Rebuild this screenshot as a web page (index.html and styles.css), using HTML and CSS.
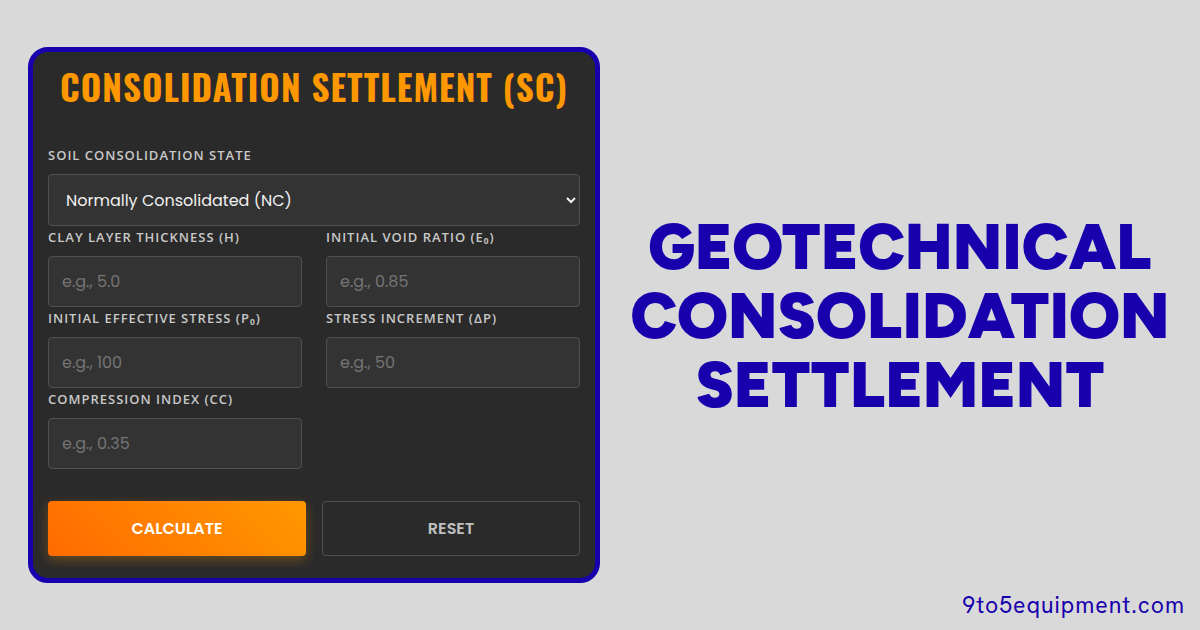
FILE: index.html
```html
<!DOCTYPE html>
<html lang="en">
<head>
<meta charset="utf-8">
<meta name="viewport" content="width=device-width, initial-scale=1">
<title>Geotechnical Consolidation Settlement</title>
<link rel="stylesheet" href="styles.css">
</head>
<body>
<main class="page">
  <form class="card">
    <h2 class="card-title">Consolidation Settlement (Sc)</h2>
    <div class="field">
      <label for="state">Soil Consolidation State</label>
      <select id="state">
        <option>Normally Consolidated (NC)</option>
        <option>Overconsolidated (OC)</option>
      </select>
    </div>
    <div class="fields">
      <div class="field">
        <label for="thickness">Clay Layer Thickness (H)</label>
        <input id="thickness" type="text" inputmode="decimal" placeholder="e.g., 5.0">
      </div>
      <div class="field">
        <label for="void">Initial Void Ratio (e₀)</label>
        <input id="void" type="text" inputmode="decimal" placeholder="e.g., 0.85">
      </div>
      <div class="field">
        <label for="stress">Initial Effective Stress (P₀)</label>
        <input id="stress" type="text" inputmode="decimal" placeholder="e.g., 100">
      </div>
      <div class="field">
        <label for="increment">Stress Increment (ΔP)</label>
        <input id="increment" type="text" inputmode="decimal" placeholder="e.g., 50">
      </div>
      <div class="field">
        <label for="index">Compression Index (Cc)</label>
        <input id="index" type="text" inputmode="decimal" placeholder="e.g., 0.35">
      </div>
    </div>
    <div class="actions">
      <button class="button button-primary" type="button">Calculate</button>
      <button class="button button-ghost" type="reset">Reset</button>
    </div>
  </form>
  <section class="intro">
    <h1 class="headline">Geotechnical Consolidation Settlement</h1>
    <a class="site" href="#">9to5equipment.com</a>
  </section>
</main>
</body>
</html>
```
FILE: styles.css
```css
* {
  box-sizing: border-box;
}

body {
  margin: 0;
  background: #d9d9d9;
  color: #1800ad;
  font-family: Poppins, Lato, sans-serif;
}

.page {
  display: grid;
  grid-template-columns: 1fr 1fr;
  align-items: center;
  min-height: 100vh;
}

.card {
  margin-left: 28px;
  padding: 14px 15px 22px;
  border: 5px solid #1800ad;
  border-radius: 20px;
  background: #2a2a2a;
}

.card-title {
  margin: 0 0 38px;
  color: #ff9800;
  font: 700 35px/40px Oswald, "Open Sans", sans-serif;
  letter-spacing: 1px;
  text-align: center;
  text-transform: uppercase;
}

.fields {
  display: grid;
  grid-template-columns: 1fr 1fr;
  column-gap: 24px;
}

.field label {
  display: block;
  margin-bottom: 8px;
  color: #c8c8c8;
  font: 600 13px/22px "Open Sans", "Noto Sans", sans-serif;
  letter-spacing: 1px;
  text-transform: uppercase;
}

.field input,
.field select {
  display: block;
  width: 100%;
  height: 51px;
  padding: 0 13px;
  border: 1px solid #505050;
  border-radius: 4px;
  background: #333;
  color: #f0f0f0;
  font: 400 16px/24px Poppins, Lato, sans-serif;
}

.field select {
  height: 52px;
}

.field input::placeholder {
  color: #747474;
}

.actions {
  display: grid;
  grid-template-columns: 1fr 1fr;
  gap: 16px;
  margin-top: 32px;
}

.button {
  height: 55px;
  border: 0;
  border-radius: 4px;
  font: 600 16px/24px Poppins, Lato, sans-serif;
  text-transform: uppercase;
}

.button-primary {
  background: linear-gradient(45deg, #ff6b00, #ff9800);
  box-shadow: 0 4px 12px rgba(255, 152, 0, 0.3);
  color: #fff;
}

.button-ghost {
  border: 1px solid #505050;
  background: transparent;
  color: #c0c0c0;
}

.intro {
  display: grid;
  grid-template-rows: 1fr auto 1fr;
  align-self: stretch;
  padding: 0 15px;
}

.headline {
  grid-row: 2;
  margin: 0;
  font: 900 64px/69px Figtree, Inter, sans-serif;
  text-align: center;
  text-transform: uppercase;
}

.site {
  grid-row: 3;
  place-self: end;
  margin-bottom: 9px;
  color: inherit;
  font: 400 23px/32px "Hanken Grotesk", Lato, sans-serif;
  letter-spacing: 1px;
  text-decoration: none;
}
```
